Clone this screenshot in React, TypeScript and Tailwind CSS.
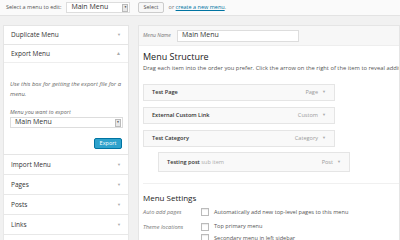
const SIDE_PANELS = ['Import Menu', 'Pages', 'Posts', 'Links', ''];

const MENU_ITEMS = [
    { title: 'Test Page', type: 'Page' },
    { title: 'External Custom Link', type: 'Custom' },
    { title: 'Test Category', type: 'Category' },
];

function Arrow({ className = '' }: { className?: string }) {
    return <span className={`text-[4px] text-[#aaa] leading-none ${className}`}>▼</span>;
}

function Checkbox() {
    return <span className="w-[8px] h-[8px] border border-[#bbb] bg-white shrink-0 shadow-[inset_0_1px_1px_rgba(0,0,0,0.08)]" />;
}

export default function App() {
    return (
        <div className="w-[400px] h-[240px] overflow-hidden bg-[#f1f1f1] text-[#444] font-['Open_Sans',sans-serif]">
            {/* Top bar */}
            <div className="h-[16px] flex items-center pl-[6px] gap-[5px] bg-[#fafafa] border-b border-[#e3e3e3] text-[5.5px]">
                <span className="text-[#555]">Select a menu to edit:</span>
                <div className="flex items-center w-[64px] h-[11px] bg-white border border-[#ddd] pl-[4px] text-[7px] text-[#333]">
                    <span className="flex-1">Main Menu</span>
                    <span className="w-[6px] h-[8px] mr-[1px] bg-[#e8e8e8] border border-[#bbb] flex items-center justify-center text-[3px]">▼</span>
                </div>
                <span className="ml-[3px] h-[11px] px-[4px] flex items-center bg-[#f7f7f7] border border-[#ccc] rounded-[2px] text-[#555]">Select</span>
                <span className="text-[#777]">or <span className="text-[#0074a2] underline">create a new menu</span>.</span>
            </div>

            <div className="flex pt-[9px] pl-[3px] gap-[9px]">
                {/* Left column */}
                <div className="w-[126px] shrink-0 flex flex-col">
                    <div className="h-[20px] flex items-center justify-between px-[7px] bg-white border border-[#e5e5e5] text-[6.5px] text-[#333]">
                        <span>Duplicate Menu</span>
                        <Arrow />
                    </div>
                    <div className="bg-white border-x border-b border-[#e5e5e5]">
                        <div className="h-[18px] flex items-center justify-between px-[7px] border-b border-[#eee] text-[6.5px] text-[#333]">
                            <span>Export Menu</span>
                            <span className="text-[5px] text-[#aaa] leading-none">▲</span>
                        </div>
                        <div className="pl-[6px] pr-[5px] pt-[16px] pb-[5px]">
                            <p className="italic text-[5.9px] leading-[10px] text-[#666]">Use this box for getting the export file for a menu.</p>
                            <p className="italic text-[5.5px] leading-[8px] text-[#666] mt-[9px]">Menu you want to export</p>
                            <div className="mt-[1px] flex items-center h-[11px] bg-white border border-[#ddd] pl-[4px] text-[7px] text-[#333]">
                                <span className="flex-1">Main Menu</span>
                                <span className="w-[6px] h-[8px] mr-[1px] bg-[#e8e8e8] border border-[#bbb] flex items-center justify-center text-[3px]">▼</span>
                            </div>
                            <div className="flex justify-end mt-[10px] pr-[1px]">
                                <span className="h-[11px] w-[28px] flex items-center justify-center rounded-[2px] bg-[#2ea2cc] border border-[#0074a2] text-white text-[5.5px]">Export</span>
                            </div>
                        </div>
                    </div>
                    {SIDE_PANELS.map((label, i) => (
                        <div key={i} className="h-[20px] shrink-0 flex items-center justify-between px-[7px] bg-white border-x border-b border-[#e8e8e8] text-[6.5px] text-[#333]">
                            {label && (
                                <>
                                    <span>{label}</span>
                                    <Arrow />
                                </>
                            )}
                        </div>
                    ))}
                </div>

                {/* Right column */}
                <div className="flex-1 min-w-0 bg-white border border-[#e5e5e5] min-h-[260px] overflow-hidden">
                    <div className="h-[20px] flex items-center gap-[6px] px-[4px] bg-[#f7f7f7] border-b border-[#eee]">
                        <span className="italic text-[5.2px] text-[#777]">Menu Name</span>
                        <div className="w-[122px] h-[12px] flex items-center px-[4px] bg-white border border-[#ddd] text-[7px] text-[#333]">Main Menu</div>
                    </div>
                    <div className="pl-[4px] pt-[5px]">
                        <h2 className="text-[9px] leading-[12px] text-[#222]">Menu Structure</h2>
                        <p className="mt-[1px] text-[5.8px] leading-[8px] text-[#555] whitespace-nowrap">Drag each item into the order you prefer. Click the arrow on the right of the item to reveal additional</p>
                        <div className="mt-[12px] w-[192px] flex flex-col gap-[6px]">
                            {MENU_ITEMS.map((item) => (
                                <div key={item.title} className="h-[17px] flex items-center justify-between px-[8px] bg-[#f9f9f9] border border-[#e5e5e5] text-[5.6px]">
                                    <span className="font-semibold text-[#333]">{item.title}</span>
                                    <span className="flex items-center gap-[4px] text-[#999]">{item.type}<Arrow /></span>
                                </div>
                            ))}
                        </div>
                        <div className="mt-[5px] ml-[15px] w-[192px] h-[20px] flex items-center justify-between px-[8px] bg-[#f9f9f9] border border-[#e5e5e5] text-[5.6px]">
                            <span><span className="font-semibold text-[#333]">Testing post</span> <span className="text-[#aaa]">sub item</span></span>
                            <span className="flex items-center gap-[4px] text-[#999]">Post<Arrow /></span>
                        </div>
                        <div className="mt-[11px] border-t border-[#f0f0f0] pt-[9px]">
                            <h3 className="text-[8px] leading-[10px] text-[#222]">Menu Settings</h3>
                            <div className="mt-[5px] flex items-center text-[5.6px]">
                                <span className="w-[58px] italic text-[#777]">Auto add pages</span>
                                <Checkbox />
                                <span className="ml-[5px] text-[#555]">Automatically add new top-level pages to this menu</span>
                            </div>
                            <div className="mt-[6px] flex text-[5.6px]">
                                <span className="w-[58px] italic text-[#777] pt-[1px]">Theme locations</span>
                                <div className="flex flex-col gap-[3px]">
                                    <div className="flex items-center"><Checkbox /><span className="ml-[5px] text-[#555]">Top primary menu</span></div>
                                    <div className="flex items-center"><Checkbox /><span className="ml-[5px] text-[#555]">Secondary menu in left sidebar</span></div>
                                </div>
                            </div>
                        </div>
                    </div>
                </div>
            </div>
        </div>
    );
}
